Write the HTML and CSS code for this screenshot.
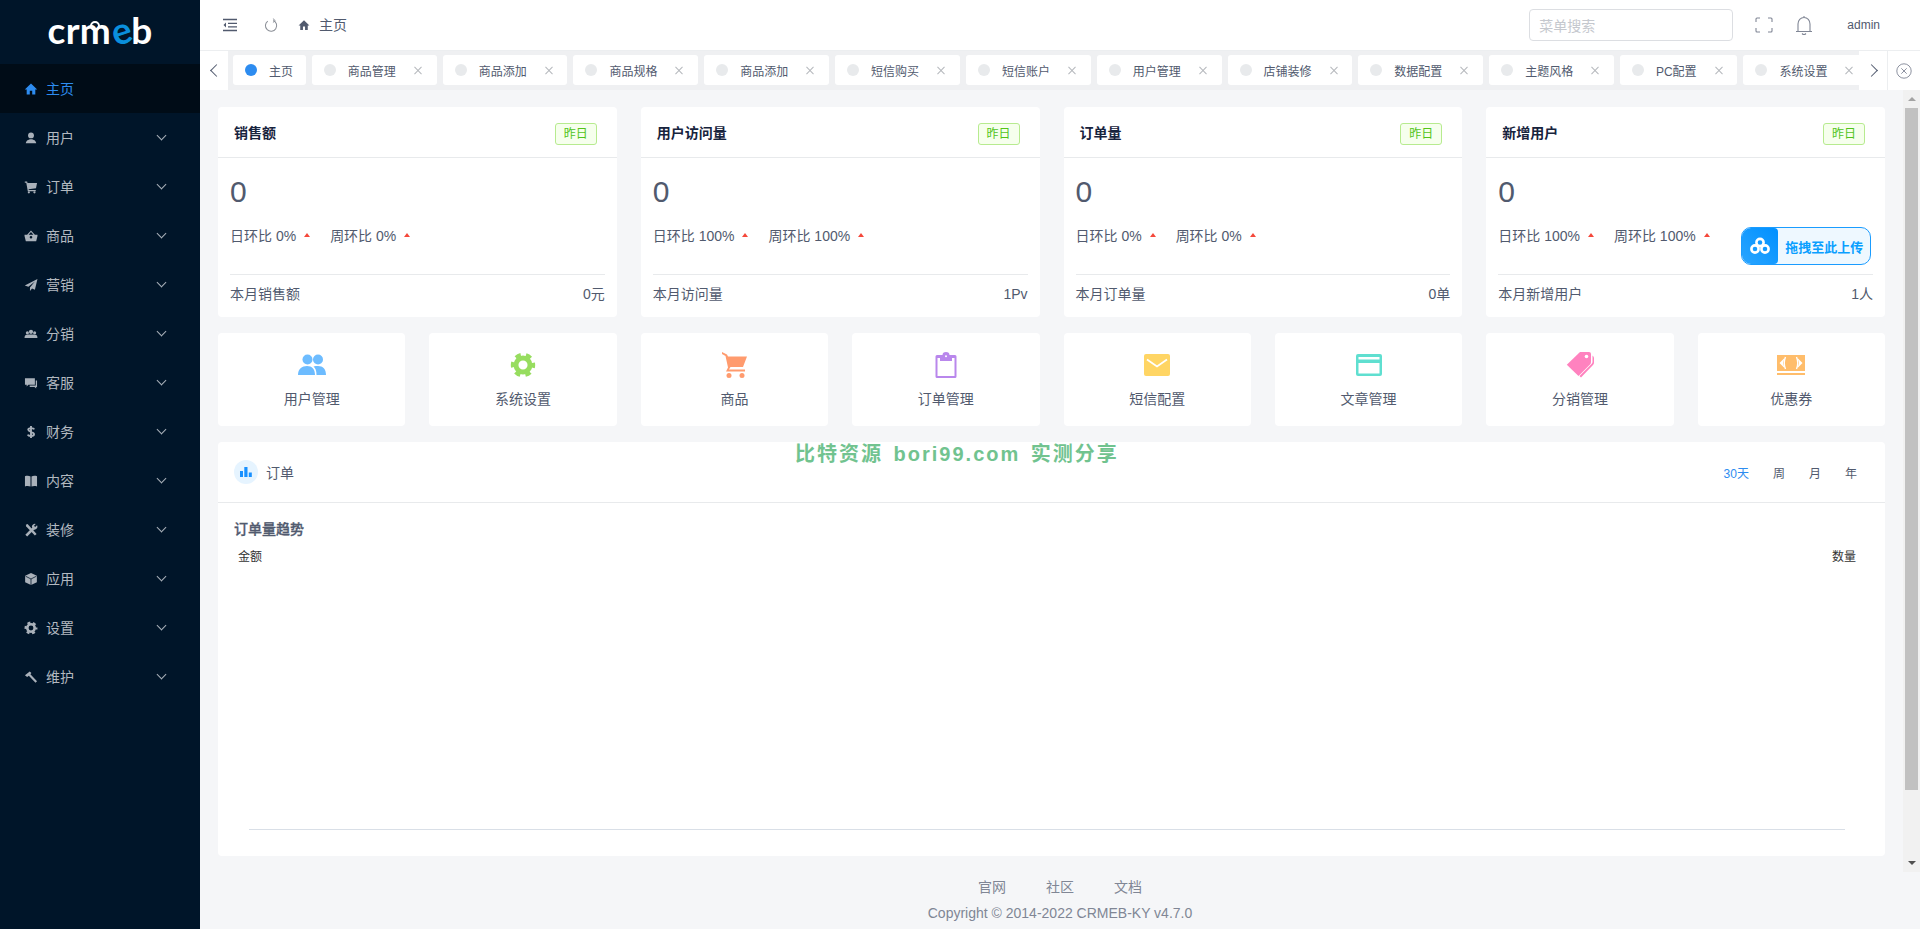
FILE: index.html
```html
<!DOCTYPE html>
<html lang="zh-CN">
<head>
    <meta charset="UTF-8">
    <meta name="viewport" content="width=device-width, initial-scale=1.0">
    <title>主页 - CRMEB</title>
    <link rel="stylesheet" href="styles.css">
</head>
<body>
    <svg class="defs" aria-hidden="true">
        <symbol id="i-home" viewBox="0 0 16 16"><path d="M8 1.5 .8 8.5H3V14.5h3.6V10h2.8v4.5H13V8.5h2.2Z"/></symbol>
        <symbol id="i-user" viewBox="0 0 16 16"><circle cx="8" cy="5" r="3.4"/><path d="M2 14.2c0-3 3-4.8 6-4.8s6 1.800 6 4.800Z"/></symbol>
        <symbol id="i-cart" viewBox="0 0 16 16"><path d="M.8 1.500H3.500L4 3.500H15L13.800 9.500 5.200 10.500 5.500 11.500H13.500V12.800H4.300L2.500 3H.8Z"/><circle cx="5.500" cy="14.200" r="1.300"/><circle cx="12" cy="14.200" r="1.300"/></symbol>
        <symbol id="i-basket" viewBox="0 0 16 16"><path d="M8 1.500 12.500 6.500H15.500V8L14 14H2L.5 8V6.500H3.500ZM5.200 6.500H10.800L8 3.500ZM6.500 9.500a1.500 1.500 0 1 0 3 0 1.500 1.500 0 1 0-3 0Z" fill-rule="evenodd"/></symbol>
        <symbol id="i-send" viewBox="0 0 16 16"><path d="M15.500 1 .8 8.500 5 10 12.500 4 6.800 11V15L9.200 12 12.500 13.500Z"/></symbol>
        <symbol id="i-team" viewBox="0 0 16 16"><circle cx="8" cy="5.500" r="2.400"/><circle cx="3.800" cy="6.500" r="1.800"/><circle cx="12.200" cy="6.500" r="1.800"/><path d="M.5 12.500C.5 9.500 2 8.500 3.800 8.500H12.200C14 8.500 15.500 9.500 15.500 12.500Z"/></symbol>
        <symbol id="i-chat" viewBox="0 0 16 16"><path d="M1 2.500H12.500V10H5L3 12V10H1Z"/><path d="M13.500 5H15V12.500H14V14.500L12 12.500H6.500V11H13.500Z"/></symbol>
        <symbol id="i-dollar" viewBox="0 0 16 16"><path d="M11.800 5C10.800 3 4.800 3 4.800 5.500S11.500 7.800 11.500 10.500 5.200 13.200 4.200 11M8 1V15" fill="none" stroke="currentColor" stroke-width="2.200"/></symbol>
        <symbol id="i-book" viewBox="0 0 16 16"><path d="M1 2.500C3 1.800 5.800 1.800 7.400 2.800V14.500C5.800 13.600 3 13.600 1 14.300ZM15 2.500C13 1.800 10.200 1.800 8.600 2.800V14.500C10.200 13.600 13 13.600 15 14.300Z"/></symbol>
        <symbol id="i-tools" viewBox="0 0 16 16"><path d="M2.500 14.500 11 6" fill="none" stroke="currentColor" stroke-width="3"/><path d="M2 2 4 1 14.500 12.500 12.500 14.500 2.500 4Z"/><path d="M9 4.500A3.500 3.500 0 0 1 13.500 1L11.500 3.200 12.800 4.500 15 2.500A3.500 3.500 0 0 1 11 7.500Z"/></symbol>
        <symbol id="i-cube" viewBox="0 0 16 16"><path d="M8 1 14.800 4.300V11.700L8 15 1.200 11.700V4.300Z"/><path d="M1.800 4.800 8 8 14.200 4.800M8 8V15" fill="none" stroke="#001529" stroke-width=".9"/></symbol>
        <symbol id="i-gear" viewBox="0 0 16 16"><circle cx="8" cy="8" r="4.300" fill="none" stroke="currentColor" stroke-width="3"/><circle cx="8" cy="8" r="6.200" fill="none" stroke="currentColor" stroke-width="2.600" stroke-dasharray="3.300 3.190" stroke-dashoffset="1.600"/></symbol>
        <symbol id="i-hammer" viewBox="0 0 16 16"><path d="M1 6 6.500 1.500 8.500 3.500 7.300 4.800 15 13 13.200 14.800 5.500 6.500 3.500 8Z"/></symbol>
    </svg>

    <aside class="sidebar">
        <div class="logo">
            <span class="logo-text">crm<span class="logo-e">e</span>b</span>
            <span class="logo-dot"></span>
        </div>
        <nav class="menu">
            <a class="menu-item active"><svg class="menu-icon"><use href="#i-home"/></svg><span>主页</span></a>
            <a class="menu-item"><svg class="menu-icon"><use href="#i-user"/></svg><span>用户</span><i class="chev"></i></a>
            <a class="menu-item"><svg class="menu-icon"><use href="#i-cart"/></svg><span>订单</span><i class="chev"></i></a>
            <a class="menu-item"><svg class="menu-icon"><use href="#i-basket"/></svg><span>商品</span><i class="chev"></i></a>
            <a class="menu-item"><svg class="menu-icon"><use href="#i-send"/></svg><span>营销</span><i class="chev"></i></a>
            <a class="menu-item"><svg class="menu-icon"><use href="#i-team"/></svg><span>分销</span><i class="chev"></i></a>
            <a class="menu-item"><svg class="menu-icon"><use href="#i-chat"/></svg><span>客服</span><i class="chev"></i></a>
            <a class="menu-item"><svg class="menu-icon"><use href="#i-dollar"/></svg><span>财务</span><i class="chev"></i></a>
            <a class="menu-item"><svg class="menu-icon"><use href="#i-book"/></svg><span>内容</span><i class="chev"></i></a>
            <a class="menu-item"><svg class="menu-icon"><use href="#i-tools"/></svg><span>装修</span><i class="chev"></i></a>
            <a class="menu-item"><svg class="menu-icon"><use href="#i-cube"/></svg><span>应用</span><i class="chev"></i></a>
            <a class="menu-item"><svg class="menu-icon"><use href="#i-gear"/></svg><span>设置</span><i class="chev"></i></a>
            <a class="menu-item"><svg class="menu-icon"><use href="#i-hammer"/></svg><span>维护</span><i class="chev"></i></a>
        </nav>
    </aside>

    <div class="main">
        <header class="topbar">
            <svg class="tool-fold" viewBox="0 0 16 14" fill="none" stroke="#515a6e" stroke-width="1.300"><path d="M1 1.500H15M6 5.300H15M6 8.900H15M1 12.500H15"/><path d="M4 4.500 1.500 7 4 9.500Z" fill="#515a6e" stroke="none"/></svg>
            <svg class="tool-refresh" viewBox="0 0 16 16" fill="none" stroke="#8b8f97" stroke-width="1.100"><path d="M9.800 2.600A6 6 0 1 1 4 3.300"/><path d="M9.500 .6 12 2.800 9.500 4.800" stroke-width="1"/></svg>
            <svg class="crumb-icon"><use href="#i-home"/></svg>
            <span class="crumb">主页</span>
            <div class="search">菜单搜索</div>
            <svg class="tool-full" viewBox="0 0 18 16" fill="none" stroke="#808695" stroke-width="1.100"><path d="M1 5V2Q1 1 2 1H5M13 1H16Q17 1 17 2V5M17 11V14Q17 15 16 15H13M5 15H2Q1 15 1 14V11"/></svg>
            <svg class="tool-bell" viewBox="0 0 18 21" fill="none" stroke="#808695" stroke-width="1.100"><path d="M1 16.500H17M3 16.500V9C3 5.300 5.500 2.500 9 2.500S15 5.300 15 9V16.500M9 1V2.500M7 18.500Q9 20.500 11 18.500"/></svg>
            <span class="admin">admin</span>
        </header>

        <div class="tabs">
            <div class="tab-arrow"><i class="arrow-left"></i></div>
            <div class="tab-strip">
                <div class="tab current"><i class="dot"></i><span>主页</span></div>
                <div class="tab"><i class="dot"></i><span>商品管理</span><i class="close"></i></div>
                <div class="tab"><i class="dot"></i><span>商品添加</span><i class="close"></i></div>
                <div class="tab"><i class="dot"></i><span>商品规格</span><i class="close"></i></div>
                <div class="tab"><i class="dot"></i><span>商品添加</span><i class="close"></i></div>
                <div class="tab"><i class="dot"></i><span>短信购买</span><i class="close"></i></div>
                <div class="tab"><i class="dot"></i><span>短信账户</span><i class="close"></i></div>
                <div class="tab"><i class="dot"></i><span>用户管理</span><i class="close"></i></div>
                <div class="tab"><i class="dot"></i><span>店铺装修</span><i class="close"></i></div>
                <div class="tab"><i class="dot"></i><span>数据配置</span><i class="close"></i></div>
                <div class="tab"><i class="dot"></i><span>主题风格</span><i class="close"></i></div>
                <div class="tab"><i class="dot"></i><span>PC配置</span><i class="close"></i></div>
                <div class="tab"><i class="dot"></i><span>系统设置</span><i class="close"></i></div>
            </div>
            <div class="tab-arrow"><i class="arrow-right"></i></div>
            <div class="tab-closeall"><svg viewBox="0 0 16 16" fill="none" stroke="#808695" stroke-width=".9"><circle cx="8" cy="8" r="7.200"/><path d="M5.300 5.300 10.700 10.700M10.700 5.300 5.300 10.700"/></svg></div>
        </div>

        <div class="body-row">
            <main class="content">
                <section class="stats">
                    <div class="card">
                        <div class="card-head"><h3>销售额</h3><span class="tag">昨日</span></div>
                        <div class="card-body">
                            <div class="value">0</div>
                            <div class="trend"><span>日环比 0%</span><i class="up"></i><span>周环比 0%</span><i class="up"></i></div>
                            <div class="card-foot"><span>本月销售额</span><span>0元</span></div>
                        </div>
                    </div>
                    <div class="card">
                        <div class="card-head"><h3>用户访问量</h3><span class="tag">昨日</span></div>
                        <div class="card-body">
                            <div class="value">0</div>
                            <div class="trend"><span>日环比 100%</span><i class="up"></i><span>周环比 100%</span><i class="up"></i></div>
                            <div class="card-foot"><span>本月访问量</span><span>1Pv</span></div>
                        </div>
                    </div>
                    <div class="card">
                        <div class="card-head"><h3>订单量</h3><span class="tag">昨日</span></div>
                        <div class="card-body">
                            <div class="value">0</div>
                            <div class="trend"><span>日环比 0%</span><i class="up"></i><span>周环比 0%</span><i class="up"></i></div>
                            <div class="card-foot"><span>本月订单量</span><span>0单</span></div>
                        </div>
                    </div>
                    <div class="card">
                        <div class="card-head"><h3>新增用户</h3><span class="tag">昨日</span></div>
                        <div class="card-body">
                            <div class="value">0</div>
                            <div class="trend"><span>日环比 100%</span><i class="up"></i><span>周环比 100%</span><i class="up"></i></div>
                            <div class="card-foot"><span>本月新增用户</span><span>1人</span></div>
                        </div>
                        <div class="upload">
                            <span class="upload-icon">
                                <svg viewBox="0 0 20 18" fill="none" stroke="#fff" stroke-width="2.600"><circle cx="10" cy="5.500" r="3.600"/><circle cx="5" cy="12" r="3.600"/><circle cx="15" cy="12" r="3.600"/></svg>
                            </span>
                            <span class="upload-text">拖拽至此上传</span>
                        </div>
                    </div>
                </section>

                <section class="quick">
                    <div class="quick-item">
                        <svg viewBox="0 0 28 26" fill="#6dbcff"><circle cx="9.500" cy="7.500" r="5"/><circle cx="20" cy="7.500" r="5"/><path d="M0 23C0 17 4 14 9 14S17 17 17 23ZM18.500 23C18.500 19 17.500 16 15.500 14.500 17 14 18.500 14 20 14 25 14 28 17 28 23Z"/></svg>
                        <span>用户管理</span>
                    </div>
                    <div class="quick-item">
                        <svg viewBox="0 0 16 16" color="#97dd5f"><use href="#i-gear"/></svg>
                        <span>系统设置</span>
                    </div>
                    <div class="quick-item">
                        <svg viewBox="0 0 28 26" fill="#ff9b6e"><path d="M2 0 7 2.500 8 4.500H27L23 15H10.500L9 17.500H25V19.500H6L8 15.500 5.500 4 2 2Z"/><circle cx="9" cy="23.500" r="2.500"/><circle cx="22" cy="23.500" r="2.500"/></svg>
                        <span>商品</span>
                    </div>
                    <div class="quick-item">
                        <svg viewBox="0 0 28 26" fill="#b987ec"><path d="M5 3H10.500A3.500 3 0 0 1 17.500 3H23Q24.500 3 24.500 4.500V24.500Q24.500 26 23 26H5Q3.500 26 3.500 24.500V4.500Q3.500 3 5 3ZM5.500 6V24H22.500V6H20V9H8V6Z" fill-rule="evenodd"/><circle cx="14" cy="4.300" r="1" fill="#fff"/></svg>
                        <span>订单管理</span>
                    </div>
                    <div class="quick-item">
                        <svg viewBox="0 0 28 26"><rect x="1" y="2" width="26" height="22" rx="2" fill="#ffd564"/><path d="M4 7.500 14 14.500 24 7.500" fill="none" stroke="#fff" stroke-width="1.800"/></svg>
                        <span>短信配置</span>
                    </div>
                    <div class="quick-item">
                        <svg viewBox="0 0 28 26"><rect x="1" y="2" width="26" height="22" rx="2" fill="#5fdfd0"/><rect x="3.500" y="5" width="21" height="2.500" fill="#fff"/><rect x="3.500" y="11" width="21" height="10.500" fill="#fff"/></svg>
                        <span>文章管理</span>
                    </div>
                    <div class="quick-item">
                        <svg viewBox="0 0 28 26"><path d="M14 0H23Q25 0 25 2V10Q25 11.500 24 12.500L12.500 24 .8 12.800Z" fill="#ff82bf"/><path d="M26.500 3.500Q28 4.500 28 6V10.500Q28 12 27 13L15 25.500 13.500 24 25.500 12Q26.500 11 26.500 10Z" fill="#ff82bf"/><circle cx="20.500" cy="4.500" r="1.800" fill="#fff"/></svg>
                        <span>分销管理</span>
                    </div>
                    <div class="quick-item">
                        <svg viewBox="0 0 28 26"><rect x="0" y="3" width="28" height="16" fill="#ffbd6b"/><rect x="0" y="21" width="28" height="2" fill="#ffbd6b"/><path d="M7.500 6 2.500 11 7.500 16 6 11ZM20.500 6 25.500 11 20.500 16 22 11Z" fill="#fff"/><ellipse cx="14" cy="11" rx="6" ry="7" fill="#ffbd6b"/><path d="M8.500 5Q6 11 8.500 17M19.500 5Q22 11 19.500 17" fill="none" stroke="#fff" stroke-width="1.400"/></svg>
                        <span>优惠券</span>
                    </div>
                </section>

                <section class="orders">
                    <div class="orders-head">
                        <span class="orders-badge"><svg viewBox="0 0 12 10" fill="#1890ff"><rect x="0" y="4" width="3" height="6"/><rect x="4.300" y="0" width="3.200" height="10"/><rect x="8.800" y="5.500" width="3" height="4.500"/></svg></span>
                        <span class="orders-title">订单</span>
                        <div class="periods">
                            <span class="on">30天</span>
                            <span>周</span>
                            <span>月</span>
                            <span>年</span>
                        </div>
                    </div>
                    <div class="orders-body">
                        <h4>订单量趋势</h4>
                        <div class="axis-labels"><span>金额</span><span>数量</span></div>
                        <div class="plot"></div>
                    </div>
                </section>
            </main>
            <div class="scrollbar" aria-hidden="true">
                <i class="sb-up"></i>
                <div class="sb-track"><div class="sb-thumb"></div></div>
                <i class="sb-down"></i>
            </div>
        </div>

        <footer class="footer">
            <div class="foot-links"><a>官网</a><a>社区</a><a>文档</a></div>
            <div class="copyright">Copyright © 2014-2022 CRMEB-KY v4.7.0</div>
        </footer>

        <div class="watermark">比特资源 bori99.com 实测分享</div>
    </div>
</body>
</html>
```

FILE: styles.css
```css
* {
    box-sizing: border-box;
}

html, body {
    height: 100%;
}

body {
    margin: 0;
    display: flex;
    overflow: hidden;
    font-family: "Liberation Sans", "Noto Sans CJK SC", sans-serif;
    font-size: 14px;
    color: #515a6e;
    background: #f5f6f8;
}

.defs {
    display: none;
}

/* sidebar */
.sidebar {
    flex: none;
    width: 200px;
    background: #001529;
}

.logo {
    position: relative;
    height: 64px;
    display: flex;
    justify-content: center;
    padding-top: 6px;
}

.logo-text {
    font-family: Lato, sans-serif;
    font-weight: 700;
    font-size: 37px;
    line-height: 48px;
    letter-spacing: .3px;
    color: #fff;
}

.logo-e {
    display: inline-block;
    color: #0a8fdc;
    transform: rotate(-18deg);
}

.logo-dot {
    position: absolute;
    top: 21px;
    left: 90px;
    width: 10px;
    height: 10px;
    border: 2.5px solid #fff;
    border-radius: 50%;
}

.menu-item {
    display: flex;
    align-items: center;
    height: 49px;
    padding-left: 25px;
    color: #b3b9c0;
}

.menu-item span {
    margin-left: 9px;
    line-height: 20px;
}

.menu-icon {
    width: 12px;
    height: 12px;
    flex: none;
    fill: currentColor;
    color: #a9b1ba;
    transform: scale(1.15);
}

.menu-item.active {
    background: #000c17;
    color: #2d8cf0;
}

.menu-item.active .menu-icon {
    color: #2d8cf0;
}

.chev {
    width: 7px;
    height: 7px;
    margin-left: auto;
    margin-right: 35px;
    margin-top: -4px;
    border-right: 1.5px solid #a9b1ba;
    border-bottom: 1.5px solid #a9b1ba;
    transform: rotate(45deg);
}

/* right side */
.main {
    position: relative;
    flex: 1;
    min-width: 0;
    display: flex;
    flex-direction: column;
}

.topbar {
    flex: none;
    height: 50px;
    display: flex;
    align-items: center;
    background: #fff;
    padding-right: 40px;
}

.tool-fold {
    width: 16px;
    height: 14px;
    margin-left: 22px;
}

.tool-refresh {
    width: 15px;
    height: 15px;
    margin-left: 26px;
}

.crumb-icon {
    width: 12px;
    height: 12px;
    margin-left: 19px;
    fill: #515a6e;
}

.crumb {
    margin-left: 9px;
    line-height: 20px;
}

.search {
    width: 204px;
    height: 32px;
    margin-left: auto;
    padding-left: 9px;
    border: 1px solid #dcdee2;
    border-radius: 4px;
    color: #c5c8ce;
    line-height: 32px;
}

.tool-full {
    width: 18px;
    height: 16px;
    margin-left: 22px;
}

.tool-bell {
    width: 18px;
    height: 21px;
    margin-left: 22px;
}

.admin {
    margin-left: 34px;
    font-size: 12px;
}

.tabs {
    flex: none;
    height: 40px;
    display: flex;
    border-top: 1px solid #eceef0;
    background: #eff0f2;
}

.tab-arrow {
    flex: none;
    width: 28px;
    display: flex;
    align-items: center;
    justify-content: center;
    background: #fff;
}

.arrow-left, .arrow-right {
    width: 9px;
    height: 9px;
    border-left: 1.5px solid #515a6e;
    border-bottom: 1.5px solid #515a6e;
}

.arrow-left {
    transform: translateX(2px) rotate(45deg);
}

.arrow-right {
    transform: translateX(-2px) rotate(225deg);
}

.tab-strip {
    flex: 1;
    min-width: 0;
    display: flex;
    align-items: center;
    gap: 6px;
    padding-left: 5px;
    padding-bottom: 1px;
    overflow: hidden;
}

.tab {
    flex: none;
    height: 30px;
    display: flex;
    align-items: center;
    padding: 0 12.8px 0 12px;
    background: #fff;
    border-radius: 3px;
    font-size: 12px;
}

.dot {
    width: 12px;
    height: 12px;
    margin-right: 12px;
    border-radius: 50%;
    background: #e8eaec;
}

.tab.current .dot {
    background: #2d8cf0;
}

.close {
    position: relative;
    width: 12px;
    height: 12px;
    margin-left: 16px;
}

.close::before, .close::after {
    content: "";
    position: absolute;
    top: 5.5px;
    left: 1px;
    width: 10px;
    height: 1px;
    background: #b5b8bd;
    transform: rotate(45deg);
}

.close::after {
    transform: rotate(-45deg);
}

.tab-closeall {
    flex: none;
    width: 33px;
    display: flex;
    align-items: center;
    justify-content: center;
    background: #fff;
    border-left: 1px solid #eceef0;
}

.tab-closeall svg {
    width: 16px;
    height: 16px;
}

.body-row {
    flex: 1;
    min-height: 0;
    display: flex;
}

.content {
    flex: 1;
    min-width: 0;
    padding: 17px 18px 16px;
    display: flex;
    flex-direction: column;
    gap: 16px;
}

/* stat cards */
.stats {
    display: grid;
    grid-template-columns: repeat(4, 1fr);
    gap: 24px;
}

.card {
    position: relative;
    height: 210px;
    background: #fff;
    border-radius: 4px;
}

.card-head {
    height: 51px;
    display: flex;
    align-items: center;
    justify-content: space-between;
    padding: 0 20px 0 16px;
    border-bottom: 1px solid #e8eaec;
}

.card-head h3 {
    margin: 0;
    font-size: 14px;
    font-weight: 700;
    color: #17233d;
}

.tag {
    width: 42px;
    height: 22px;
    margin-top: 4px;
    border: 1px solid #b7eb8f;
    border-radius: 3px;
    background: #f6ffed;
    color: #52c41a;
    font-size: 12px;
    line-height: 20px;
    text-align: center;
}

.card-body {
    padding: 0 12px;
}

.value {
    margin-top: 16px;
    font-size: 30px;
    line-height: 36px;
}

.trend {
    display: flex;
    align-items: center;
    height: 20px;
    margin-top: 15px;
}

.up {
    width: 0;
    height: 0;
    margin: 0 20px 0 8px;
    border-left: 3.5px solid transparent;
    border-right: 3.5px solid transparent;
    border-bottom: 4px solid #f5483b;
}

.card-foot {
    display: flex;
    justify-content: space-between;
    margin-top: 29px;
    padding-top: 9px;
    border-top: 1px solid #e8eaec;
    line-height: 20px;
}

.upload {
    position: absolute;
    left: 255px;
    top: 120px;
    width: 130px;
    height: 38px;
    display: flex;
    align-items: center;
    border: 1px solid #1a9cff;
    border-radius: 10px;
    background: #eef8ff;
}

.upload-icon {
    width: 36px;
    height: 36px;
    display: flex;
    align-items: center;
    justify-content: center;
    border-radius: 9px 4px 4px 9px;
    background: linear-gradient(45deg, #2aa5ff, #0090ff);
}

.upload-icon svg {
    width: 20px;
    height: 18px;
}

.upload-text {
    margin-left: 7px;
    color: #0a9fff;
    font-size: 13px;
    font-weight: 700;
}

/* quick links */
.quick {
    display: grid;
    grid-template-columns: repeat(8, 1fr);
    gap: 24px;
}

.quick-item {
    height: 93px;
    display: flex;
    flex-direction: column;
    align-items: center;
    padding-top: 19px;
    background: #fff;
    border-radius: 4px;
}

.quick-item svg {
    width: 28px;
    height: 26px;
}

.quick-item span {
    margin-top: 11px;
    line-height: 20px;
}

/* order chart */
.orders {
    flex: 1;
    min-height: 0;
    display: flex;
    flex-direction: column;
    background: #fff;
    border-radius: 4px;
}

.orders-head {
    flex: none;
    height: 61px;
    display: flex;
    align-items: center;
    padding: 0 28px 0 16px;
    border-bottom: 1px solid #e8eaec;
}

.orders-badge {
    width: 24px;
    height: 24px;
    display: flex;
    align-items: center;
    justify-content: center;
    border-radius: 50%;
    background: #e6f4ff;
}

.orders-badge svg {
    width: 12px;
    height: 10px;
}

.orders-title {
    margin-left: 8px;
}

.periods {
    display: flex;
    gap: 24px;
    margin-left: auto;
    font-size: 12px;
}

.periods .on {
    color: #2d8cf0;
}

.orders-body {
    flex: 1;
    min-height: 0;
    display: flex;
    flex-direction: column;
    padding: 16px 40px 26px 16px;
}

.orders-body h4 {
    margin: 0;
    font-size: 14px;
    font-weight: 500;
    line-height: 20px;
    color: #515a6e;
    -webkit-text-stroke: .3px #515a6e;
}

.axis-labels {
    display: flex;
    justify-content: space-between;
    margin-top: 9px;
    margin-right: -11px;
    padding-left: 4px;
    font-size: 12px;
    line-height: 18px;
    color: #333;
}

.plot {
    flex: 1;
    margin-left: 15px;
    border-bottom: 1px solid #d9dfe7;
}

/* page scrollbar */
.scrollbar {
    flex: none;
    width: 17px;
    display: flex;
    flex-direction: column;
    align-items: center;
    background: #f1f1f1;
}

.sb-up, .sb-down {
    flex: none;
    width: 0;
    height: 0;
    margin: 7px 0;
    border-left: 4px solid transparent;
    border-right: 4px solid transparent;
}

.sb-up {
    border-bottom: 4px solid #a3a3a3;
}

.sb-down {
    border-top: 4px solid #505050;
}

.sb-track {
    flex: 1;
    width: 100%;
    padding: 0 2px;
}

.sb-thumb {
    height: 682px;
    background: #c1c1c1;
}

/* footer */
.footer {
    flex: none;
    height: 57px;
    padding-top: 5px;
    text-align: center;
    color: #808695;
}

.foot-links {
    display: flex;
    justify-content: center;
    gap: 40px;
    line-height: 20px;
}

.copyright {
    margin-top: 6px;
    line-height: 20px;
}

.watermark {
    position: absolute;
    left: 595px;
    top: 441px;
    font-size: 20px;
    font-weight: 700;
    line-height: 26px;
    letter-spacing: 2px;
    word-spacing: 3px;
    white-space: nowrap;
    color: #71c38f;
}
```
